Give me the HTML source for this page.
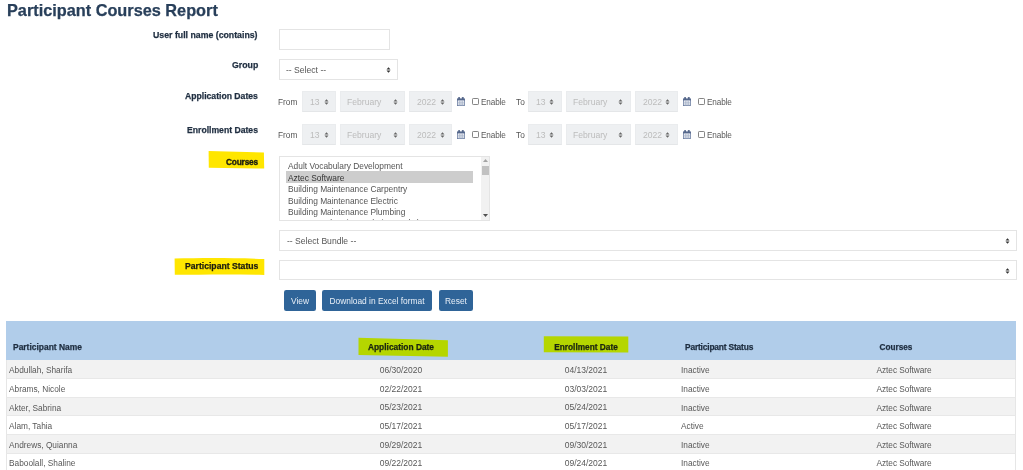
<!DOCTYPE html>
<html><head><meta charset="utf-8"><title>Participant Courses Report</title>
<style>
html,body{margin:0;padding:0;background:#fff;width:1023px;height:470px;overflow:hidden;position:relative}
.t{position:absolute;white-space:pre;line-height:1;font-family:"Liberation Sans",sans-serif;-webkit-font-smoothing:antialiased;will-change:transform}
.k{-webkit-text-stroke:0.25px currentColor}
.b{position:absolute;box-sizing:border-box}
</style></head><body>
<div class="t" style="left:7.00px;top:2.00px;font-size:16.3px;font-weight:700;color:#283f5a;-webkit-text-stroke:0.25px currentColor">Participant Courses Report</div>
<svg class="b" style="left:0;top:0" width="1023" height="470"><path d="M208.6 150.9 L263.9 152.6 L264.2 168.6 L208.8 167.7 Z" fill="#ffe600"/><path d="M174.6 258.6 C200 258.0 230 257.8 264.3 259.0 L264.3 274.9 C230 274.0 200 274.6 174.8 274.8 Z" fill="#ffe600"/></svg>
<div class="t k" style="right:765.00px;top:31.49px;font-size:8.75px;font-weight:700;color:#1f2e40;">User full name (contains)</div>
<div class="t k" style="right:765.00px;top:61.19px;font-size:8.75px;font-weight:700;color:#1f2e40;">Group</div>
<div class="t k" style="right:765.00px;top:92.28px;font-size:8.65px;font-weight:700;color:#1f2e40;">Application Dates</div>
<div class="t k" style="right:765.00px;top:125.88px;font-size:8.65px;font-weight:700;color:#1f2e40;">Enrollment Dates</div>
<div class="t k" style="right:764.60px;top:158.23px;font-size:8.35px;font-weight:700;color:#1c1c10;letter-spacing:-0.2px;-webkit-text-stroke:0.35px currentColor">Courses</div>
<div class="t k" style="right:765.00px;top:262.28px;font-size:8.65px;font-weight:700;color:#1c1c10;">Participant Status</div>
<div class="b" style="left:279.20px;top:29.20px;width:110.40px;height:20.50px;border:1px solid #e4e4e4;background:#fff"></div>
<div class="b" style="left:279.40px;top:59.30px;width:118.20px;height:20.70px;border:1px solid #e4e4e4;background:#fff"></div>
<div class="t" style="left:286.40px;top:66.02px;font-size:8.6px;font-weight:400;color:#555;">-- Select --</div>
<svg class="b" style="left:385.60px;top:66.50px" width="5" height="6" viewBox="0 0 5 6"><path d="M0.5 2.5 L2.5 0.2 L4.5 2.5 Z M0.5 3.5 L2.5 5.8 L4.5 3.5 Z" fill="#333"/></svg>
<div class="t" style="left:278.40px;top:98.17px;font-size:8.3px;font-weight:400;color:#555;">From</div>
<div class="b" style="left:302.40px;top:91.10px;width:33.40px;height:20.60px;background:#eef0f2;border:1px solid #eaecee;border-bottom-color:#e4e6e8"></div>
<div class="t" style="left:309.70px;top:97.92px;font-size:8.6px;font-weight:400;color:#bcbcbc;">13</div>
<svg class="b" style="left:323.90px;top:98.90px" width="5" height="6" viewBox="0 0 5 6"><path d="M0.5 2.5 L2.5 0.2 L4.5 2.5 Z M0.5 3.5 L2.5 5.8 L4.5 3.5 Z" fill="#666"/></svg>
<div class="b" style="left:340.10px;top:91.10px;width:64.90px;height:20.60px;background:#eef0f2;border:1px solid #eaecee;border-bottom-color:#e4e6e8"></div>
<div class="t" style="left:347.40px;top:97.92px;font-size:8.6px;font-weight:400;color:#bcbcbc;">February</div>
<svg class="b" style="left:392.70px;top:98.90px" width="5" height="6" viewBox="0 0 5 6"><path d="M0.5 2.5 L2.5 0.2 L4.5 2.5 Z M0.5 3.5 L2.5 5.8 L4.5 3.5 Z" fill="#666"/></svg>
<div class="b" style="left:409.00px;top:91.10px;width:43.00px;height:20.60px;background:#eef0f2;border:1px solid #eaecee;border-bottom-color:#e4e6e8"></div>
<div class="t" style="left:417.30px;top:97.92px;font-size:8.6px;font-weight:400;color:#bcbcbc;">2022</div>
<svg class="b" style="left:439.60px;top:98.90px" width="5" height="6" viewBox="0 0 5 6"><path d="M0.5 2.5 L2.5 0.2 L4.5 2.5 Z M0.5 3.5 L2.5 5.8 L4.5 3.5 Z" fill="#666"/></svg>
<div class="b" style="left:528.10px;top:91.10px;width:33.70px;height:20.60px;background:#eef0f2;border:1px solid #eaecee;border-bottom-color:#e4e6e8"></div>
<div class="t" style="left:535.90px;top:97.92px;font-size:8.6px;font-weight:400;color:#bcbcbc;">13</div>
<svg class="b" style="left:549.30px;top:98.90px" width="5" height="6" viewBox="0 0 5 6"><path d="M0.5 2.5 L2.5 0.2 L4.5 2.5 Z M0.5 3.5 L2.5 5.8 L4.5 3.5 Z" fill="#666"/></svg>
<div class="b" style="left:566.20px;top:91.10px;width:64.60px;height:20.60px;background:#eef0f2;border:1px solid #eaecee;border-bottom-color:#e4e6e8"></div>
<div class="t" style="left:572.90px;top:97.92px;font-size:8.6px;font-weight:400;color:#bcbcbc;">February</div>
<svg class="b" style="left:618.10px;top:98.90px" width="5" height="6" viewBox="0 0 5 6"><path d="M0.5 2.5 L2.5 0.2 L4.5 2.5 Z M0.5 3.5 L2.5 5.8 L4.5 3.5 Z" fill="#666"/></svg>
<div class="b" style="left:635.20px;top:91.10px;width:42.60px;height:20.60px;background:#eef0f2;border:1px solid #eaecee;border-bottom-color:#e4e6e8"></div>
<div class="t" style="left:642.90px;top:97.92px;font-size:8.6px;font-weight:400;color:#bcbcbc;">2022</div>
<svg class="b" style="left:665.10px;top:98.90px" width="5" height="6" viewBox="0 0 5 6"><path d="M0.5 2.5 L2.5 0.2 L4.5 2.5 Z M0.5 3.5 L2.5 5.8 L4.5 3.5 Z" fill="#666"/></svg>
<svg class="b" style="left:457.00px;top:96.90px" width="8" height="9" viewBox="0 0 8 9"><rect x="0.45" y="1.9" width="7.1" height="6.7" fill="#f2f4f8" stroke="#6a7ca0" stroke-width="0.8"/><rect x="0.1" y="1.7" width="7.8" height="1.7" fill="#55688c"/><rect x="1.2" y="0" width="1.8" height="2.6" rx="0.6" fill="#55678a"/><rect x="4.9" y="0" width="1.8" height="2.6" rx="0.6" fill="#55678a"/><path d="M2.45 3.6 V8.6 M4 3.6 V8.6 M5.55 3.6 V8.6 M0.4 5.3 H7.6 M0.4 7 H7.6" stroke="#9eabc2" stroke-width="0.6"/></svg>
<svg class="b" style="left:682.60px;top:96.90px" width="8" height="9" viewBox="0 0 8 9"><rect x="0.45" y="1.9" width="7.1" height="6.7" fill="#f2f4f8" stroke="#6a7ca0" stroke-width="0.8"/><rect x="0.1" y="1.7" width="7.8" height="1.7" fill="#55688c"/><rect x="1.2" y="0" width="1.8" height="2.6" rx="0.6" fill="#55678a"/><rect x="4.9" y="0" width="1.8" height="2.6" rx="0.6" fill="#55678a"/><path d="M2.45 3.6 V8.6 M4 3.6 V8.6 M5.55 3.6 V8.6 M0.4 5.3 H7.6 M0.4 7 H7.6" stroke="#9eabc2" stroke-width="0.6"/></svg>
<div class="b" style="left:472.20px;top:98.20px;width:6.90px;height:6.70px;border:0.8px solid #858585;border-radius:1.2px;background:#fff"></div>
<div class="b" style="left:698.10px;top:98.20px;width:6.90px;height:6.70px;border:0.8px solid #858585;border-radius:1.2px;background:#fff"></div>
<div class="t" style="left:481.20px;top:98.66px;font-size:8.2px;font-weight:400;color:#5a5a5a;letter-spacing:-0.12px">Enable</div>
<div class="t" style="left:707.00px;top:98.66px;font-size:8.2px;font-weight:400;color:#5a5a5a;letter-spacing:-0.12px">Enable</div>
<div class="t" style="left:516.00px;top:98.17px;font-size:8.3px;font-weight:400;color:#555;">To</div>
<div class="t" style="left:278.40px;top:131.37px;font-size:8.3px;font-weight:400;color:#555;">From</div>
<div class="b" style="left:302.40px;top:124.30px;width:33.40px;height:20.60px;background:#eef0f2;border:1px solid #eaecee;border-bottom-color:#e4e6e8"></div>
<div class="t" style="left:309.70px;top:131.12px;font-size:8.6px;font-weight:400;color:#bcbcbc;">13</div>
<svg class="b" style="left:323.90px;top:132.10px" width="5" height="6" viewBox="0 0 5 6"><path d="M0.5 2.5 L2.5 0.2 L4.5 2.5 Z M0.5 3.5 L2.5 5.8 L4.5 3.5 Z" fill="#666"/></svg>
<div class="b" style="left:340.10px;top:124.30px;width:64.90px;height:20.60px;background:#eef0f2;border:1px solid #eaecee;border-bottom-color:#e4e6e8"></div>
<div class="t" style="left:347.40px;top:131.12px;font-size:8.6px;font-weight:400;color:#bcbcbc;">February</div>
<svg class="b" style="left:392.70px;top:132.10px" width="5" height="6" viewBox="0 0 5 6"><path d="M0.5 2.5 L2.5 0.2 L4.5 2.5 Z M0.5 3.5 L2.5 5.8 L4.5 3.5 Z" fill="#666"/></svg>
<div class="b" style="left:409.00px;top:124.30px;width:43.00px;height:20.60px;background:#eef0f2;border:1px solid #eaecee;border-bottom-color:#e4e6e8"></div>
<div class="t" style="left:417.30px;top:131.12px;font-size:8.6px;font-weight:400;color:#bcbcbc;">2022</div>
<svg class="b" style="left:439.60px;top:132.10px" width="5" height="6" viewBox="0 0 5 6"><path d="M0.5 2.5 L2.5 0.2 L4.5 2.5 Z M0.5 3.5 L2.5 5.8 L4.5 3.5 Z" fill="#666"/></svg>
<div class="b" style="left:528.10px;top:124.30px;width:33.70px;height:20.60px;background:#eef0f2;border:1px solid #eaecee;border-bottom-color:#e4e6e8"></div>
<div class="t" style="left:535.90px;top:131.12px;font-size:8.6px;font-weight:400;color:#bcbcbc;">13</div>
<svg class="b" style="left:549.30px;top:132.10px" width="5" height="6" viewBox="0 0 5 6"><path d="M0.5 2.5 L2.5 0.2 L4.5 2.5 Z M0.5 3.5 L2.5 5.8 L4.5 3.5 Z" fill="#666"/></svg>
<div class="b" style="left:566.20px;top:124.30px;width:64.60px;height:20.60px;background:#eef0f2;border:1px solid #eaecee;border-bottom-color:#e4e6e8"></div>
<div class="t" style="left:572.90px;top:131.12px;font-size:8.6px;font-weight:400;color:#bcbcbc;">February</div>
<svg class="b" style="left:618.10px;top:132.10px" width="5" height="6" viewBox="0 0 5 6"><path d="M0.5 2.5 L2.5 0.2 L4.5 2.5 Z M0.5 3.5 L2.5 5.8 L4.5 3.5 Z" fill="#666"/></svg>
<div class="b" style="left:635.20px;top:124.30px;width:42.60px;height:20.60px;background:#eef0f2;border:1px solid #eaecee;border-bottom-color:#e4e6e8"></div>
<div class="t" style="left:642.90px;top:131.12px;font-size:8.6px;font-weight:400;color:#bcbcbc;">2022</div>
<svg class="b" style="left:665.10px;top:132.10px" width="5" height="6" viewBox="0 0 5 6"><path d="M0.5 2.5 L2.5 0.2 L4.5 2.5 Z M0.5 3.5 L2.5 5.8 L4.5 3.5 Z" fill="#666"/></svg>
<svg class="b" style="left:457.00px;top:130.10px" width="8" height="9" viewBox="0 0 8 9"><rect x="0.45" y="1.9" width="7.1" height="6.7" fill="#f2f4f8" stroke="#6a7ca0" stroke-width="0.8"/><rect x="0.1" y="1.7" width="7.8" height="1.7" fill="#55688c"/><rect x="1.2" y="0" width="1.8" height="2.6" rx="0.6" fill="#55678a"/><rect x="4.9" y="0" width="1.8" height="2.6" rx="0.6" fill="#55678a"/><path d="M2.45 3.6 V8.6 M4 3.6 V8.6 M5.55 3.6 V8.6 M0.4 5.3 H7.6 M0.4 7 H7.6" stroke="#9eabc2" stroke-width="0.6"/></svg>
<svg class="b" style="left:682.60px;top:130.10px" width="8" height="9" viewBox="0 0 8 9"><rect x="0.45" y="1.9" width="7.1" height="6.7" fill="#f2f4f8" stroke="#6a7ca0" stroke-width="0.8"/><rect x="0.1" y="1.7" width="7.8" height="1.7" fill="#55688c"/><rect x="1.2" y="0" width="1.8" height="2.6" rx="0.6" fill="#55678a"/><rect x="4.9" y="0" width="1.8" height="2.6" rx="0.6" fill="#55678a"/><path d="M2.45 3.6 V8.6 M4 3.6 V8.6 M5.55 3.6 V8.6 M0.4 5.3 H7.6 M0.4 7 H7.6" stroke="#9eabc2" stroke-width="0.6"/></svg>
<div class="b" style="left:472.20px;top:131.40px;width:6.90px;height:6.70px;border:0.8px solid #858585;border-radius:1.2px;background:#fff"></div>
<div class="b" style="left:698.10px;top:131.40px;width:6.90px;height:6.70px;border:0.8px solid #858585;border-radius:1.2px;background:#fff"></div>
<div class="t" style="left:481.20px;top:131.86px;font-size:8.2px;font-weight:400;color:#5a5a5a;letter-spacing:-0.12px">Enable</div>
<div class="t" style="left:707.00px;top:131.86px;font-size:8.2px;font-weight:400;color:#5a5a5a;letter-spacing:-0.12px">Enable</div>
<div class="t" style="left:516.00px;top:131.37px;font-size:8.3px;font-weight:400;color:#555;">To</div>
<div class="b" style="left:279.40px;top:156.30px;width:210.90px;height:64.50px;border:1px solid #e4e4e4;background:#fff;overflow:hidden"></div>
<div class="b" style="left:286.20px;top:171.40px;width:187.30px;height:11.20px;background:#cdcdcd"></div>
<div class="t" style="left:288.00px;top:161.99px;font-size:8.4px;font-weight:400;color:#555;">Adult Vocabulary Development</div>
<div class="t" style="left:288.00px;top:173.52px;font-size:8.4px;font-weight:400;color:#333;">Aztec Software</div>
<div class="t" style="left:288.00px;top:185.05px;font-size:8.4px;font-weight:400;color:#555;">Building Maintenance Carpentry</div>
<div class="t" style="left:288.00px;top:196.58px;font-size:8.4px;font-weight:400;color:#555;">Building Maintenance Electric</div>
<div class="t" style="left:288.00px;top:208.11px;font-size:8.4px;font-weight:400;color:#555;">Building Maintenance Plumbing</div>
<div class="b" style="left:280px;top:216px;width:200px;height:4.3px;overflow:hidden"><div class="t" style="left:8.00px;top:3.49px;font-size:8.4px;font-weight:400;color:#555;">Career Exploration and Fire Workshop</div></div>
<div class="b" style="left:481.30px;top:157.00px;width:8.20px;height:63.00px;background:#f1f1f1"></div>
<div class="b" style="left:482.20px;top:165.70px;width:6.40px;height:9.50px;background:#c1c1c1"></div>
<svg class="b" style="left:482px;top:158px" width="7" height="5"><path d="M1 4 L3.5 1 L6 4 Z" fill="#a3a3a3"/></svg>
<svg class="b" style="left:482px;top:213px" width="7" height="5"><path d="M1 1 L3.5 4 L6 1 Z" fill="#505050"/></svg>
<div class="b" style="left:279.40px;top:230.30px;width:737.50px;height:20.80px;border:1px solid #e4e4e4;background:#fff"></div>
<div class="t" style="left:286.90px;top:236.82px;font-size:8.6px;font-weight:400;color:#555;">-- Select Bundle --</div>
<svg class="b" style="left:1004.60px;top:237.60px" width="5" height="6" viewBox="0 0 5 6"><path d="M0.5 2.5 L2.5 0.2 L4.5 2.5 Z M0.5 3.5 L2.5 5.8 L4.5 3.5 Z" fill="#333"/></svg>
<div class="b" style="left:279.40px;top:259.80px;width:737.50px;height:20.40px;border:1px solid #e4e4e4;background:#fff"></div>
<svg class="b" style="left:1004.60px;top:267.50px" width="5" height="6" viewBox="0 0 5 6"><path d="M0.5 2.5 L2.5 0.2 L4.5 2.5 Z M0.5 3.5 L2.5 5.8 L4.5 3.5 Z" fill="#333"/></svg>
<div class="b" style="left:283.80px;top:290.40px;width:32.10px;height:20.20px;background:#2f6498;border-radius:2.2px"></div>
<div class="t" style="left:99.85px;width:400px;text-align:center;top:296.89px;font-size:8.4px;font-weight:400;color:#e8eff7;">View</div>
<div class="b" style="left:322.10px;top:290.40px;width:109.90px;height:20.20px;background:#2f6498;border-radius:2.2px"></div>
<div class="t" style="left:177.05px;width:400px;text-align:center;top:296.89px;font-size:8.4px;font-weight:400;color:#e8eff7;">Download in Excel format</div>
<div class="b" style="left:439.00px;top:290.40px;width:34.10px;height:20.20px;background:#2f6498;border-radius:2.2px"></div>
<div class="t" style="left:256.05px;width:400px;text-align:center;top:296.89px;font-size:8.4px;font-weight:400;color:#e8eff7;">Reset</div>
<div class="b" style="left:6.30px;top:321.00px;width:1009.90px;height:39.00px;background:#b1cdea"></div>
<div class="b" style="left:6.30px;top:360.00px;width:1009.90px;height:18.78px;background:#f2f2f2;border-left:1px solid #e6e6e6;border-right:1px solid #e6e6e6;border-bottom:1px solid #e8e8e8"></div>
<div class="b" style="left:6.30px;top:378.78px;width:1009.90px;height:18.78px;background:#fff;border-left:1px solid #e6e6e6;border-right:1px solid #e6e6e6;border-bottom:1px solid #e8e8e8"></div>
<div class="b" style="left:6.30px;top:397.56px;width:1009.90px;height:18.78px;background:#f2f2f2;border-left:1px solid #e6e6e6;border-right:1px solid #e6e6e6;border-bottom:1px solid #e8e8e8"></div>
<div class="b" style="left:6.30px;top:416.34px;width:1009.90px;height:18.78px;background:#fff;border-left:1px solid #e6e6e6;border-right:1px solid #e6e6e6;border-bottom:1px solid #e8e8e8"></div>
<div class="b" style="left:6.30px;top:435.12px;width:1009.90px;height:18.78px;background:#f2f2f2;border-left:1px solid #e6e6e6;border-right:1px solid #e6e6e6;border-bottom:1px solid #e8e8e8"></div>
<div class="b" style="left:6.30px;top:453.90px;width:1009.90px;height:18.78px;background:#fff;border-left:1px solid #e6e6e6;border-right:1px solid #e6e6e6;border-bottom:1px solid #e8e8e8"></div>
<svg class="b" style="left:0;top:0" width="1023" height="470"><path d="M358.5 337.8 L447.9 340.3 L447.9 356.7 L358.5 355 Z" fill="#b5d600"/><path d="M543.8 336.2 L628.3 336.6 L628.3 352.4 L543.8 352.2 Z" fill="#b5d600"/></svg>
<div class="t k" style="left:13.40px;top:343.35px;font-size:8.45px;font-weight:700;color:#1f2e40;">Participant Name</div>
<div class="t k" style="left:201.00px;width:400px;text-align:center;top:343.39px;font-size:8.4px;font-weight:700;color:#1a2410;">Application Date</div>
<div class="t k" style="left:386.30px;width:400px;text-align:center;top:343.47px;font-size:8.3px;font-weight:700;color:#1a2410;">Enrollment Date</div>
<div class="t k" style="left:684.90px;top:343.39px;font-size:8.4px;font-weight:700;color:#1f2e40;letter-spacing:-0.17px">Participant Status</div>
<div class="t k" style="left:695.70px;width:400px;text-align:center;top:343.56px;font-size:8.2px;font-weight:700;color:#1f2e40;">Courses</div>
<div class="t" style="left:9.30px;top:366.47px;font-size:8.3px;font-weight:400;color:#585858;">Abdullah, Sharifa</div>
<div class="t" style="left:201.20px;width:400px;text-align:center;top:366.30px;font-size:8.5px;font-weight:400;color:#585858;">06/30/2020</div>
<div class="t" style="left:386.00px;width:400px;text-align:center;top:366.30px;font-size:8.5px;font-weight:400;color:#585858;">04/13/2021</div>
<div class="t" style="left:680.50px;top:366.47px;font-size:8.3px;font-weight:400;color:#585858;">Inactive</div>
<div class="t" style="left:703.80px;width:400px;text-align:center;top:366.47px;font-size:8.3px;font-weight:400;color:#585858;letter-spacing:-0.06px">Aztec Software</div>
<div class="t" style="left:9.30px;top:385.02px;font-size:8.3px;font-weight:400;color:#585858;">Abrams, Nicole</div>
<div class="t" style="left:201.20px;width:400px;text-align:center;top:384.85px;font-size:8.5px;font-weight:400;color:#585858;">02/22/2021</div>
<div class="t" style="left:386.00px;width:400px;text-align:center;top:384.85px;font-size:8.5px;font-weight:400;color:#585858;">03/03/2021</div>
<div class="t" style="left:680.50px;top:385.02px;font-size:8.3px;font-weight:400;color:#585858;">Inactive</div>
<div class="t" style="left:703.80px;width:400px;text-align:center;top:385.02px;font-size:8.3px;font-weight:400;color:#585858;letter-spacing:-0.06px">Aztec Software</div>
<div class="t" style="left:9.30px;top:403.57px;font-size:8.3px;font-weight:400;color:#585858;">Akter, Sabrina</div>
<div class="t" style="left:201.20px;width:400px;text-align:center;top:403.40px;font-size:8.5px;font-weight:400;color:#585858;">05/23/2021</div>
<div class="t" style="left:386.00px;width:400px;text-align:center;top:403.40px;font-size:8.5px;font-weight:400;color:#585858;">05/24/2021</div>
<div class="t" style="left:680.50px;top:403.57px;font-size:8.3px;font-weight:400;color:#585858;">Inactive</div>
<div class="t" style="left:703.80px;width:400px;text-align:center;top:403.57px;font-size:8.3px;font-weight:400;color:#585858;letter-spacing:-0.06px">Aztec Software</div>
<div class="t" style="left:9.30px;top:422.12px;font-size:8.3px;font-weight:400;color:#585858;">Alam, Tahia</div>
<div class="t" style="left:201.20px;width:400px;text-align:center;top:421.95px;font-size:8.5px;font-weight:400;color:#585858;">05/17/2021</div>
<div class="t" style="left:386.00px;width:400px;text-align:center;top:421.95px;font-size:8.5px;font-weight:400;color:#585858;">05/17/2021</div>
<div class="t" style="left:680.50px;top:422.12px;font-size:8.3px;font-weight:400;color:#585858;">Active</div>
<div class="t" style="left:703.80px;width:400px;text-align:center;top:422.12px;font-size:8.3px;font-weight:400;color:#585858;letter-spacing:-0.06px">Aztec Software</div>
<div class="t" style="left:9.30px;top:440.67px;font-size:8.3px;font-weight:400;color:#585858;">Andrews, Quianna</div>
<div class="t" style="left:201.20px;width:400px;text-align:center;top:440.50px;font-size:8.5px;font-weight:400;color:#585858;">09/29/2021</div>
<div class="t" style="left:386.00px;width:400px;text-align:center;top:440.50px;font-size:8.5px;font-weight:400;color:#585858;">09/30/2021</div>
<div class="t" style="left:680.50px;top:440.67px;font-size:8.3px;font-weight:400;color:#585858;">Inactive</div>
<div class="t" style="left:703.80px;width:400px;text-align:center;top:440.67px;font-size:8.3px;font-weight:400;color:#585858;letter-spacing:-0.06px">Aztec Software</div>
<div class="t" style="left:9.30px;top:459.22px;font-size:8.3px;font-weight:400;color:#585858;">Baboolall, Shaline</div>
<div class="t" style="left:201.20px;width:400px;text-align:center;top:459.05px;font-size:8.5px;font-weight:400;color:#585858;">09/22/2021</div>
<div class="t" style="left:386.00px;width:400px;text-align:center;top:459.05px;font-size:8.5px;font-weight:400;color:#585858;">09/24/2021</div>
<div class="t" style="left:680.50px;top:459.22px;font-size:8.3px;font-weight:400;color:#585858;">Inactive</div>
<div class="t" style="left:703.80px;width:400px;text-align:center;top:459.22px;font-size:8.3px;font-weight:400;color:#585858;letter-spacing:-0.06px">Aztec Software</div>
</body></html>
